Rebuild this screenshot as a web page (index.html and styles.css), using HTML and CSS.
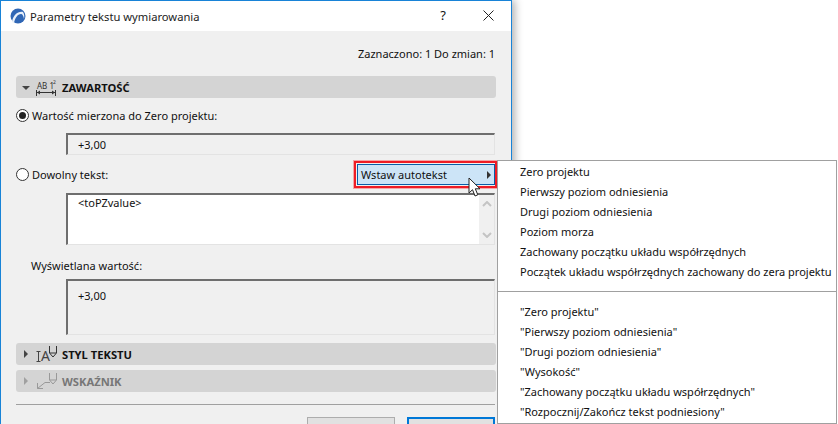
FILE: index.html
```html
<!DOCTYPE html>
<html lang="pl">
<head>
    <meta charset="UTF-8">
    <title>Parametry tekstu wymiarowania</title>
    <link rel="stylesheet" href="styles.css">
</head>
<body>
    <div class="dialog">
        <div class="titlebar">
            <svg class="app-logo" width="16" height="16" viewBox="0 0 16 16">
                <circle cx="8" cy="8" r="7.5" fill="#2f66b5"/>
                <path d="M2 14C3 7 8 3 13 4C14.500 6 14.500 9 14 11C13.500 8 12.500 6 11 6C7.500 6 5 10 4 15Z" fill="#e8f0fa"/>
            </svg>
            <span class="title">Parametry tekstu wymiarowania</span>
            <span class="help">?</span>
            <svg class="close" width="11" height="11" viewBox="0 0 11 11">
                <path d="M0.500 0.500L10.500 10.500M10.500 0.500L0.500 10.500" stroke="#222" stroke-width="1" fill="none"/>
            </svg>
        </div>

        <div class="content">
            <div class="status">Zaznaczono: 1 Do zmian: 1</div>

            <div class="section-bar">
                <span class="arrow-down"></span>
                <svg class="section-icon" width="21" height="22" viewBox="0 0 21 22">
                    <text x="1" y="12.500" class="icon-text">AB</text>
                    <text x="13.500" y="12.500" class="icon-text">1</text>
                    <text x="17" y="8" class="icon-small">2</text>
                    <path d="M0.500 14V20M19.500 14V20M1 16.500H19" stroke="#333" stroke-width="1" fill="none"/>
                    <path d="M1 16.500L4 14.500V18.500ZM19 16.500L16 14.500V18.500Z" fill="#333"/>
                </svg>
                <span class="section-name">ZAWARTOŚĆ</span>
            </div>

            <label class="radio-row first-radio">
                <span class="radio checked"></span>
                <span>Wartość mierzona do Zero projektu:</span>
            </label>
            <div class="field field-short">+3,00</div>

            <div class="radio-line">
                <label class="radio-row">
                    <span class="radio"></span>
                    <span>Dowolny tekst:</span>
                </label>
                <div class="insert-highlight">
                    <div class="insert-button">
                        <span>Wstaw autotekst</span>
                        <span class="arrow-right"></span>
                    </div>
                </div>
            </div>

            <div class="field field-input">
                <span>&lt;toPZvalue&gt;</span>
                <div class="scrollbar">
                    <svg width="10" height="6" viewBox="0 0 10 6"><path d="M1 5L5 1L9 5" stroke="#c4c4c4" stroke-width="2" fill="none"/></svg>
                    <svg width="10" height="6" viewBox="0 0 10 6"><path d="M1 1L5 5L9 1" stroke="#c4c4c4" stroke-width="2" fill="none"/></svg>
                </div>
            </div>

            <div class="shown-label">Wyświetlana wartość:</div>
            <div class="field field-tall">+3,00</div>

            <div class="section-bar bar-style">
                <span class="arrow-closed"></span>
                <svg class="section-icon" width="21" height="22" viewBox="0 0 21 22">
                    <path d="M2.500 8V19M0.500 8.500H4.500M0.500 18.500H4.500" stroke="#444" fill="none"/>
                    <text x="5" y="18" class="icon-big">A</text>
                    <path d="M13.500 3V10L17 14L20.500 10V3M14 10H20" stroke="#333" fill="none"/>
                </svg>
                <span class="section-name">STYL TEKSTU</span>
            </div>
            <div class="section-bar bar-pointer">
                <span class="arrow-closed muted"></span>
                <svg class="section-icon" width="21" height="22" viewBox="0 0 21 22">
                    <path d="M1.500 18.500L9 12.500H14M1.500 18.500V13M1.500 18.500H7" stroke="#999" fill="none"/>
                    <path d="M13.500 3V10L17 14L20.500 10V3M14 10H20" stroke="#999" fill="none"/>
                </svg>
                <span class="section-name muted-name">WSKAŹNIK</span>
            </div>

            <div class="divider"></div>

            <div class="buttons">
                <div class="btn"></div>
                <div class="btn btn-default"></div>
            </div>
        </div>
    </div>

    <div class="menu">
        <div class="menu-item">Zero projektu</div>
        <div class="menu-item">Pierwszy poziom odniesienia</div>
        <div class="menu-item">Drugi poziom odniesienia</div>
        <div class="menu-item">Poziom morza</div>
        <div class="menu-item">Zachowany początku układu współrzędnych</div>
        <div class="menu-item">Początek układu współrzędnych zachowany do zera projektu</div>
        <div class="menu-sep"></div>
        <div class="menu-item">"Zero projektu"</div>
        <div class="menu-item">"Pierwszy poziom odniesienia"</div>
        <div class="menu-item">"Drugi poziom odniesienia"</div>
        <div class="menu-item">"Wysokość"</div>
        <div class="menu-item">"Zachowany początku układu współrzędnych"</div>
        <div class="menu-item">"Rozpocznij/Zakończ tekst podniesiony"</div>
    </div>

    <svg class="cursor" width="14" height="21" viewBox="0 0 14 21">
        <path d="M1 1V16L4.500 12.700L7 19L9.800 17.800L7.300 11.800H12Z" fill="#fff" stroke="#222" stroke-width="1"/>
    </svg>
</body>
</html>
```

FILE: styles.css
```css
* {
    box-sizing: border-box;
}

html, body {
    margin: 0;
    height: 424px;
    overflow: hidden;
}

body {
    position: relative;
    width: 838px;
    background-color: #fff;
    font-family: "Noto Sans", "Open Sans", sans-serif;
    font-size: 11px;
    color: #111;
}

.dialog {
    width: 512px;
    height: 440px;
    border: 1px solid #1883d7;
    border-bottom: 0;
    background-color: #f0f0f0;
    box-shadow: 3px 0 8px rgba(0, 0, 0, 0.3);
}

.titlebar {
    display: flex;
    align-items: center;
    height: 30px;
    padding: 0 17px 0 9px;
    background-color: #fff;
}

.app-logo {
    margin-right: 4px;
}

.title {
    flex: 1;
    font-size: 11.2px;
    color: #222;
}

.help {
    margin-right: 37px;
    margin-bottom: 2px;
    font-size: 13px;
}

.close {
    margin-bottom: 2px;
}

.content {
    padding: 0 15px;
}

.status {
    height: 16px;
    margin-top: 15px;
    padding-right: 1px;
    line-height: 16px;
    text-align: right;
}

.section-bar {
    display: flex;
    align-items: center;
    height: 22px;
    margin-top: 14px;
    background-color: #d4d4d4;
    border-radius: 3px;
}

.bar-style {
    margin-top: 8px;
}

.bar-pointer {
    margin-top: 5px;
}

.arrow-down {
    width: 0;
    height: 0;
    margin: 1px 0 0 6px;
    border-left: 4px solid transparent;
    border-right: 4px solid transparent;
    border-top: 4px solid #444;
}

.arrow-closed {
    width: 0;
    height: 0;
    margin-left: 8px;
    border-top: 4px solid transparent;
    border-bottom: 4px solid transparent;
    border-left: 4px solid #444;
}

.arrow-closed.muted {
    border-left-color: #a0a0a0;
}

.section-icon {
    flex-shrink: 0;
    margin-left: 6px;
    margin-right: 5px;
}

.arrow-closed + .section-icon {
    margin-left: 8px;
}

.icon-text {
    font-size: 8px;
    fill: #333;
}

.icon-small {
    font-size: 5px;
    fill: #333;
}

.icon-big {
    font-size: 14px;
    fill: #444;
}

.section-name {
    font-weight: bold;
    font-size: 11.200px;
    color: #111;
}

.muted-name {
    color: #777;
}

.radio-row {
    display: flex;
    align-items: center;
    gap: 3px;
    height: 16px;
}

.first-radio {
    margin-top: 9px;
}

.radio {
    position: relative;
    width: 13px;
    height: 13px;
    border: 1px solid #333;
    border-radius: 50%;
    background-color: #fff;
}

.radio.checked::after {
    content: "";
    position: absolute;
    left: 2px;
    top: 2px;
    width: 7px;
    height: 7px;
    border-radius: 50%;
    background-color: #222;
}

.field {
    margin: 0 1px 0 50px;
    padding-left: 10px;
    border: 1px solid #e3e3e3;
    border-top: 2px solid #6e6e6e;
    border-left: 2px solid #6e6e6e;
}

.field-short {
    height: 22px;
    margin-top: 10px;
    line-height: 20px;
}

.field-input {
    display: flex;
    justify-content: space-between;
    height: 52px;
    line-height: 16px;
    background-color: #fff;
}

.scrollbar {
    display: flex;
    flex-direction: column;
    justify-content: space-between;
    align-items: center;
    width: 15px;
    padding: 6px 0;
    background-color: #f0f0f0;
}

.radio-line {
    display: flex;
    align-items: center;
    justify-content: space-between;
    height: 29px;
    margin: 5px -1px 4px 0;
}

.insert-highlight {
    width: 143px;
    height: 27px;
    padding: 1px 0 1px 1px;
    border: 2px solid #ee1c25;
    outline: 1px solid #f5a5a8;
    background-color: #f0f0f0;
}

.insert-button {
    display: flex;
    align-items: center;
    justify-content: space-between;
    height: 21px;
    padding: 0 3px;
    border: 1px solid #0a5ea8;
    background-color: #cce4f7;
}

.arrow-right {
    width: 0;
    height: 0;
    border-top: 4px solid transparent;
    border-bottom: 4px solid transparent;
    border-left: 4px solid #333;
}

.shown-label {
    height: 16px;
    margin: 13px 0 5px 15px;
    line-height: 16px;
}

.field-tall {
    height: 56px;
    line-height: 30px;
}

.divider {
    height: 1px;
    margin: 12px 1px 0 0;
    background-color: #a0a0a0;
}

.buttons {
    display: flex;
    justify-content: flex-end;
    gap: 12px;
    margin: 12px 1px 0 0;
}

.btn {
    width: 88px;
    height: 24px;
    border: 1px solid #adadad;
    background-color: #e1e1e1;
}

.btn-default {
    border: 2px solid #0078d7;
}

/* menu opened over the dialog */
.menu {
    position: absolute;
    left: 497px;
    top: 160px;
    width: 340px;
    height: 264px;
    padding-top: 1px;
    background-color: #fff;
    border: 1px solid #a0a0a0;
}

.menu-item {
    height: 20px;
    padding-left: 22px;
    line-height: 20px;
    white-space: nowrap;
}

.menu-sep {
    height: 1px;
    margin: 9px 0 10px;
    background-color: #a0a0a0;
}

.cursor {
    position: absolute;
    left: 468px;
    top: 177px;
}
```
